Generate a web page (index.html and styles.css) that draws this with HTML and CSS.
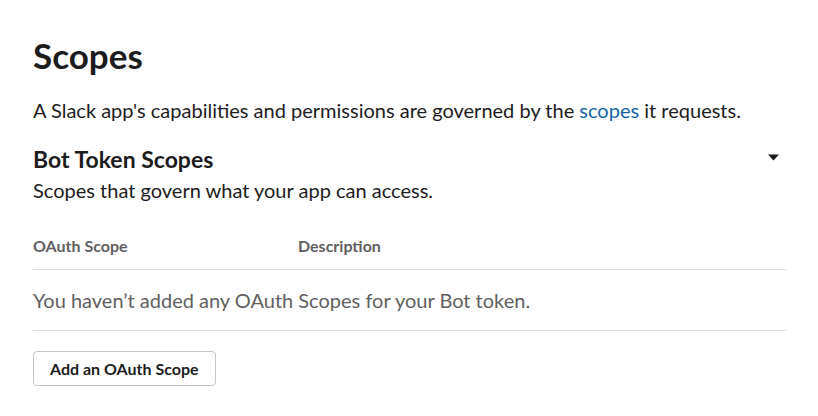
FILE: index.html
```html
<!DOCTYPE html>
<html>
<head>
<meta charset="utf-8">
<link rel="stylesheet" href="styles.css">
</head>
<body>
<main class="page">
  <h1 class="title">Scopes</h1>
  <p class="intro">A Slack app's capabilities and permissions are governed by the <a class="link" href="#">scopes</a> it requests.</p>
  <section class="section">
    <div class="section-head">
      <h2 class="section-title">Bot Token Scopes</h2>
      <span class="caret"><svg width="11" height="7" viewBox="0 0 11 7"><path d="M0 0.5 H11 L5.5 6.5 Z" fill="#1d1c1d"/></svg></span>
    </div>
    <p class="section-desc">Scopes that govern what your app can access.</p>
    <div class="table">
      <div class="thead">
        <div class="col-scope">OAuth Scope</div>
        <div class="col-desc">Description</div>
      </div>
      <div class="empty">You haven’t added any OAuth Scopes for your Bot token.</div>
    </div>
    <button class="btn">Add an OAuth Scope</button>
  </section>
</main>
</body>
</html>
```
FILE: styles.css
```css
html, body { margin: 0; padding: 0; background: #fff; }
body { font-family: Lato, "Noto Sans", sans-serif; color: #1d1c1d; }
.page { padding: 33px 31px 0 33px; width: 754px; }
.title { margin: 0; font-size: 35px; font-weight: 700; line-height: 44px; }
.intro { margin: 19px 0 0; font-size: 20px; line-height: 28px; }
.link { color: #1264a3; text-decoration: none; }
.section { margin-top: 20px; }
.section-head { display: flex; justify-content: space-between; align-items: center; }
.section-title { margin: 0; font-size: 23px; font-weight: 700; line-height: 30px; }
.caret { display: flex; margin-right: 8px; margin-top: -3px; }
.section-desc { margin: 2px 0 0; font-size: 20px; line-height: 28px; }
.table { margin-top: 32px; }
.thead { display: flex; font-size: 16px; font-weight: 700; color: #616061; padding-bottom: 13px; border-bottom: 1px solid #dddddd; line-height: 20px; }
.col-scope { width: 265px; }
.empty { font-size: 20px; color: #616061; line-height: 28px; padding: 16px 0; border-bottom: 1px solid #dddddd; }
.btn { display: block; margin-top: 20px; font-family: Lato, "Noto Sans", sans-serif; font-size: 16px; font-weight: 700; color: #1d1c1d; background: #fff; border: 1px solid #c6c6c6; border-radius: 4px; height: 35px; padding: 0 16px; }
```
